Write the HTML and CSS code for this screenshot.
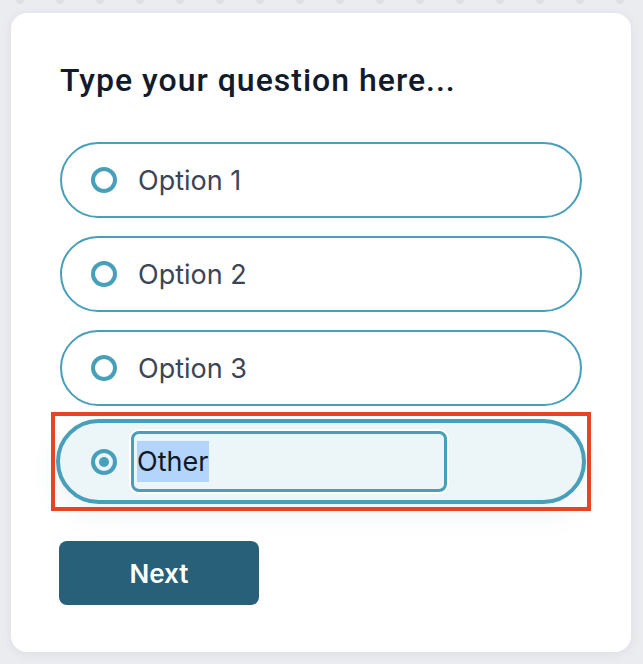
FILE: index.html
```html
<!DOCTYPE html>
<html lang="en">
<head>
<meta charset="utf-8">
<title>Question</title>
<link rel="stylesheet" href="styles.css">
</head>
<body>
<div class="card">
  <h1 class="title">Type your question here...</h1>
  <div class="options">
    <label class="option">
      <span class="radio"></span>
      <span class="label">Option 1</span>
    </label>
    <label class="option">
      <span class="radio"></span>
      <span class="label">Option 2</span>
    </label>
    <label class="option">
      <span class="radio"></span>
      <span class="label">Option 3</span>
    </label>
    <div class="option option-other">
      <span class="radio radio-checked"></span>
      <span class="other-input"><span class="selected">Other</span></span>
      <span class="highlight-box"></span>
    </div>
  </div>
  <button class="next" type="button">Next</button>
</div>
</body>
</html>
```
FILE: styles.css
```css
html, body {
  margin: 0;
  padding: 0;
}
body {
  width: 643px;
  height: 664px;
  overflow: hidden;
  background-color: #ebecf0;
  background-image: radial-gradient(circle at 20px 0, #dfe0e6 0, #dfe0e6 4px, transparent 4.5px);
  background-size: 40px 40px;
  padding: 13px 12px 12px 11px;
  box-sizing: border-box;
  font-family: Inter, "Noto Sans", sans-serif;
}
.card {
  background: #ffffff;
  border-radius: 16px;
  height: 639px;
  width: 620px;
  box-sizing: border-box;
  padding: 48px 49px 0 49px;
  box-shadow: 0 2px 10px rgba(120, 125, 150, 0.12);
}
.title {
  margin: 0;
  font-family: Roboto, "Noto Sans", sans-serif;
  font-weight: 500;
  font-size: 32px;
  line-height: 38px;
  color: #111b2c;
  letter-spacing: 1px;
}
.options {
  display: flex;
  flex-direction: column;
  gap: 18px;
  margin-top: 43px;
}
.option {
  position: relative;
  display: flex;
  align-items: center;
  height: 76px;
  box-sizing: border-box;
  border: 2px solid #489fba;
  border-radius: 38px;
  padding-left: 29px;
}
.radio {
  width: 26px;
  height: 26px;
  box-sizing: border-box;
  border: 4px solid #489fba;
  border-radius: 50%;
  flex: none;
  display: flex;
  align-items: center;
  justify-content: center;
}
.radio-checked::after {
  content: "";
  width: 10px;
  height: 10px;
  border-radius: 50%;
  background: #489fba;
}
.label {
  margin-left: 21px;
  font-size: 27px;
  color: #3a4556;
  letter-spacing: 0;
}
.option-other {
  height: 85px;
  margin: -5px -4px 0 -4px;
  border-width: 4px;
  border-radius: 43px;
  background: #ecf5f8;
  padding-left: 31px;
  box-shadow: 0 10px 28px rgba(90, 120, 150, 0.10);
}
.other-input {
  margin-left: 14px;
  width: 316px;
  height: 61px;
  box-sizing: border-box;
  border: 3px solid #489fba;
  border-radius: 8px;
  box-shadow: 0 0 0 2px #ffffff;
  display: flex;
  align-items: center;
  padding-left: 3px;
}
.selected {
  background: #b3d4fb;
  color: #101826;
  font-size: 27px;
  line-height: 41px;
  padding-right: 1px;
}
.highlight-box {
  position: absolute;
  top: -11px;
  bottom: -11px;
  left: -9px;
  right: -9px;
  border: 4px solid #e8432a;
  pointer-events: none;
}
.next {
  margin-top: 37px;
  width: 200px;
  height: 64px;
  margin-left: -1px;
  border: none;
  border-radius: 8px;
  background: #28607a;
  color: #ffffff;
  font-family: Inter, "Noto Sans", sans-serif;
  font-weight: 600;
  font-size: 26px;
  display: flex;
  align-items: center;
  justify-content: center;
  padding: 0;
}
```
